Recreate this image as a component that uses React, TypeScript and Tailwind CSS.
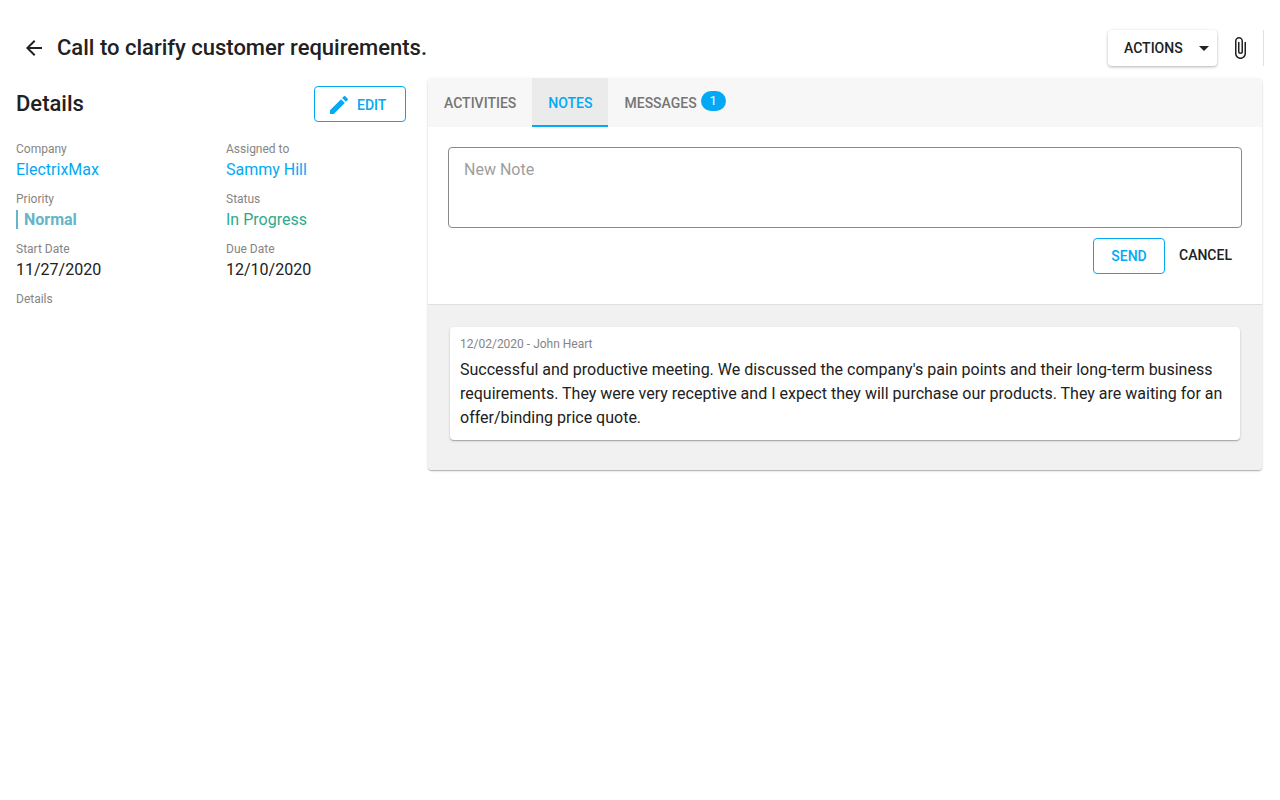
import type { ReactNode } from "react";
import { MdArrowBack, MdArrowDropDown, MdAttachFile, MdEdit } from "react-icons/md";

const cardShadow =
  "shadow-[0_1px_3px_rgba(0,0,0,0.12),0_1px_1px_rgba(0,0,0,0.14),0_1px_1px_rgba(0,0,0,0.12)]";

function Field({ label, children }: { label: string; children?: ReactNode }) {
  return (
    <div className="h-[50px]">
      <dt className="text-xs leading-4 text-[#858585]">{label}</dt>
      <dd className="text-base leading-[26px]">{children}</dd>
    </div>
  );
}

function Header() {
  return (
    <header className="flex h-9 items-center">
      <button type="button" aria-label="Back" className="flex size-9 items-center justify-center">
        <MdArrowBack size={24} />
      </button>
      <h1 className="ml-[5px] text-[22px] leading-8 font-medium">Call to clarify customer requirements.</h1>
      <div className="ml-auto flex items-center border-r border-[#e0e0e0]">
        <button
          type="button"
          className="flex h-9 w-[109px] items-center justify-between rounded pr-px pl-4 text-sm font-medium shadow-[0_1px_3px_rgba(0,0,0,0.3)]"
        >
          ACTIONS
          <MdArrowDropDown size={24} />
        </button>
        <button type="button" aria-label="Attach file" className="mr-[5px] ml-[5px] flex size-9 items-center justify-center">
          <MdAttachFile size={24} />
        </button>
      </div>
    </header>
  );
}

function Details() {
  return (
    <section className="w-[390px] shrink-0 pt-2">
      <div className="flex h-9 items-center justify-between">
        <h2 className="text-[22px] leading-8 font-medium">Details</h2>
        <button
          type="button"
          className="flex h-9 w-[92px] items-center gap-1.5 rounded border border-[#03a9f4] pt-0.5 pl-3 text-sm font-medium text-[#03a9f4]"
        >
          <MdEdit size={24} />
          EDIT
        </button>
      </div>
      <dl className="mt-[19px] grid grid-cols-[210px_1fr]">
        <Field label="Company">
          <a href="#company" className="text-[#03a9f4]">ElectrixMax</a>
        </Field>
        <Field label="Assigned to">
          <a href="#assignee" className="text-[#03a9f4]">Sammy Hill</a>
        </Field>
        <Field label="Priority">
          <span className="border-l-2 border-[#64b5c8] pl-1.5 font-bold text-[#64b5c8]">Normal</span>
        </Field>
        <Field label="Status">
          <span className="text-[#2eaa8b]">In Progress</span>
        </Field>
        <Field label="Start Date">11/27/2020</Field>
        <Field label="Due Date">12/10/2020</Field>
        <Field label="Details" />
      </dl>
    </section>
  );
}

function NotesPanel() {
  return (
    <section className={`min-w-0 flex-1 overflow-hidden rounded bg-white ${cardShadow}`}>
      <div role="tablist" className="flex h-[49px] bg-[#f7f7f7] text-sm font-medium text-[#757575]">
        <button type="button" role="tab" aria-selected="false" className="border-b-2 border-transparent px-4 pt-0.5">
          ACTIVITIES
        </button>
        <button
          type="button"
          role="tab"
          aria-selected="true"
          className="border-b-2 border-[#03a9f4] bg-[#ebebeb] px-4 pt-0.5 text-[#03a9f4]"
        >
          NOTES
        </button>
        <button type="button" role="tab" aria-selected="false" className="flex items-center gap-1 border-b-2 border-transparent px-4 pt-0.5">
          MESSAGES
          <span className="mb-1 h-5 w-[25px] rounded-full bg-[#03a9f4] text-[13px] leading-5 font-normal text-white">1</span>
        </button>
      </div>
      <form className="px-5 pt-5 pb-[30px]">
        <textarea
          aria-label="New Note"
          placeholder="New Note"
          className="block h-[81px] w-full resize-none rounded border border-[#8a8a8a] px-[15px] py-2.5 text-base leading-6 placeholder:text-[#9e9e9e]"
        />
        <div className="mt-2.5 flex items-center justify-end">
          <button
            type="button"
            className="h-9 w-[72px] rounded border border-[#03a9f4] text-sm font-medium text-[#03a9f4]"
          >
            SEND
          </button>
          <button type="button" className="h-9 w-[77px] pb-0.5 pl-1 text-sm font-medium">
            CANCEL
          </button>
        </div>
      </form>
      <div className="border-t border-[#e0e0e0] bg-[#f1f1f1] px-[22px] pt-[22px] pb-[30px]">
        <article className={`rounded bg-white px-2.5 pt-[9px] pb-2.5 ${cardShadow}`}>
          <p className="text-xs leading-4 text-[#858585]">12/02/2020 - John Heart</p>
          <p className="mt-1.5 text-base leading-6">
            Successful and productive meeting. We discussed the company's pain points and their long-term business
            requirements. They were very receptive and I expect they will purchase our products. They are waiting for
            an offer/binding price quote.
          </p>
        </article>
      </div>
    </section>
  );
}

export default function App() {
  return (
    <main className="min-h-screen bg-white px-4 pt-[30px] font-['Roboto',sans-serif] text-[#212121]">
      <Header />
      <div className="mt-3 flex gap-[22px] pr-0.5">
        <Details />
        <NotesPanel />
      </div>
    </main>
  );
}
